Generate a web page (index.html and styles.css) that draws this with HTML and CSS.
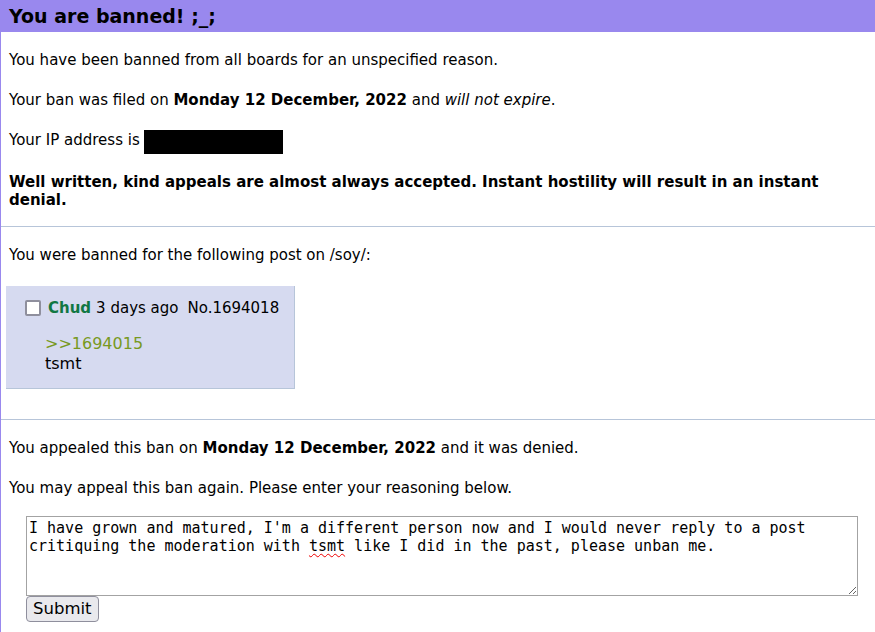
FILE: index.html
```html
<!DOCTYPE html>
<html>
<head>
<meta name="viewport" content="width=device-width, initial-scale=1">
<title>Banned</title>
<link rel="stylesheet" href="styles.css">
</head>
<body>

<div class="boxbar">
  <h2>You are banned! ;_;</h2>
</div>

<div class="boxcontent">
  <p>You have been banned from all boards for an unspecified reason.</p>

  <p>Your ban was filed on <b>Monday 12 December, 2022</b> and <i>will not expire</i>.</p>

  <p class="ip-line">Your IP address is <span class="redacted"></span></p>

  <p class="warning">Well written, kind appeals are almost always accepted. Instant hostility will result in an instant denial.</p>

  <hr>

  <p>You were banned for the following post on /soy/:</p>

  <div class="post reply">
    <div class="postinfo">
      <input type="checkbox" class="post-check" name="1694018">
      <span class="name">Chud</span>
      <span class="date">3 days ago</span>
      <span class="postnum">No.1694018</span>
    </div>
    <blockquote class="postmessage">
      <span class="quotelink">&gt;&gt;1694015</span><br>
      tsmt
    </blockquote>
  </div>

  <hr>

  <p>You appealed this ban on <b>Monday 12 December, 2022</b> and it was denied.</p>

  <p class="last">You may appeal this ban again. Please enter your reasoning below.</p>

  <form class="appeal" action="#" method="post">
    <div class="appeal-text" role="textbox" contenteditable="true">I have grown and matured, I'm a different person now and I would never reply to a post critiquing the moderation with <span class="misspelt">tsmt</span> like I did in the past, please unban me.</div>
    <button type="submit" class="submit">Submit</button>
  </form>
</div>

</body>
</html>
```

FILE: styles.css
```css
body {
  margin: 0;
  font-family: "DejaVu Sans", Verdana, sans-serif;
  font-size: 15px;
  color: #000;
  background-color: #fff;
}

/* purple title strip */
.boxbar {
  background-color: #9988ee;
  height: 32px;
}

.boxbar h2 {
  margin: 0;
  padding: 0 9px;
  font-size: 19px;
  line-height: 32px;
}

.boxcontent {
  border-left: 1px solid #9988ee;
  padding: 19px 8px 20px 8px;
}

.boxcontent p {
  margin: 0 0 22px 0;
  line-height: 18px;
}

/* black bar over the address, kept out of the line height */
.redacted {
  display: inline-block;
  width: 139px;
  height: 24px;
  margin: -2px 0 -5px 0;
  background-color: #000;
  vertical-align: -4px;
}

.boxcontent .ip-line {
  margin-bottom: 24px;
}

.warning {
  font-weight: bold;
}

hr {
  border: none;
  border-top: 1px solid #b7c5d9;
  margin: -5px -8px 19px -8px;
  height: 0;
}

/* the reported post */
.reply {
  background-color: #d6daf0;
  border-right: 1px solid #b7c5d9;
  border-bottom: 1px solid #b7c5d9;
  display: inline-block;
  margin: 0 0 35px -3px;
  padding: 12px 15px 14px 18px;
  width: 255px;
}

.postinfo {
  display: flex;
  align-items: center;
  height: 20px;
  white-space: nowrap;
}

.post-check {
  appearance: none;
  -webkit-appearance: none;
  flex: none;
  width: 16px;
  height: 16px;
  margin: 0 7px 0 1px;
  border: 2px solid #8f8f9d;
  border-radius: 2px;
  background: #fff;
}

.name {
  color: #117743;
  font-weight: bold;
  margin-right: 5px;
}

.date {
  margin-right: 9px;
}

.postmessage {
  margin: 16px 0 0 21px;
  font-size: 16px;
  line-height: 20px;
}

.quotelink {
  color: #789922;
}

.boxcontent .last {
  margin-bottom: 19px;
}

/* appeal box */
.appeal {
  margin-left: 17px;
}

.appeal-text {
  width: 826px;
  height: 74px;
  padding: 2px;
  border: 1px solid #a3a3a3;
  font-family: "DejaVu Sans Mono", monospace;
  font-size: 15px;
  line-height: 18px;
  white-space: pre-wrap;
  overflow: auto;
  resize: both;
  outline: none;
}

.misspelt {
  text-decoration: underline wavy #e00;
  text-decoration-thickness: 1px;
  text-underline-offset: 2px;
}

.submit {
  display: block;
  margin-top: 0;
  font-family: "DejaVu Sans", sans-serif;
  font-size: 16.5px;
  line-height: 18px;
  padding: 3px 6px;
  height: 26px;
  background-color: #e9e9ed;
  border: 1px solid #8f8f9d;
  border-radius: 4px;
  color: #000;
}
```
